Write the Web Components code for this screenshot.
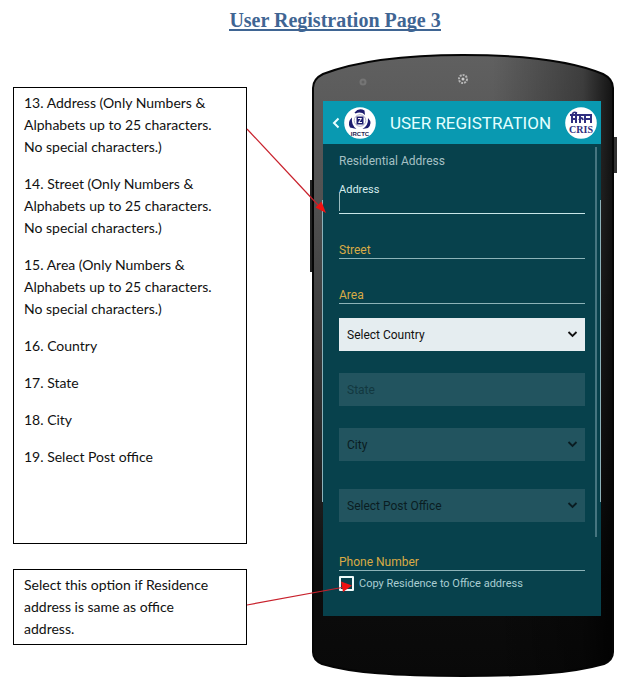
<!DOCTYPE html>
<html lang="en">
<head>
<meta charset="utf-8">
<title>User Registration Page 3</title>
<style>
  body { margin: 0; background: #fff; font-family: Lato, "Liberation Sans", sans-serif; }
</style>
</head>
<body>
<guide-page>
  <span slot="title">User Registration Page 3</span>
  <note-box slot="notes" class="grow">
    <p>13. Address (Only Numbers &amp; Alphabets up to 25 characters. No special characters.)</p>
    <p>14. Street (Only Numbers &amp; Alphabets up to 25 characters. No special characters.)</p>
    <p>15. Area (Only Numbers &amp; Alphabets up to 25 characters. No special characters.)</p>
    <p>16. Country</p>
    <p>17. State</p>
    <p>18. City</p>
    <p>19. Select Post office</p>
  </note-box>
  <note-box slot="notes">
    <p>Select this option if Residence address is same as office address.</p>
  </note-box>
  <phone-frame slot="phone">
    <app-header slot="bar">USER REGISTRATION</app-header>
    <address-form>
      <line-field active>Address</line-field>
      <line-field>Street</line-field>
      <line-field>Area</line-field>
      <drop-down light label="Select Country"></drop-down>
      <state-field label="State"></state-field>
      <drop-down label="City"></drop-down>
      <drop-down label="Select Post Office" class="last"></drop-down>
      <line-field class="phone">Phone Number</line-field>
      <check-option>Copy Residence to Office address</check-option>
    </address-form>
  </phone-frame>
</guide-page>

<script>
const define = (name, html) => customElements.define(name, class extends HTMLElement {
  constructor() {
    super();
    this.attachShadow({ mode: 'open' }).innerHTML =
      html.replaceAll('{{label}}', this.getAttribute('label') || '');
  }
});

define('guide-page', `
<style>
  :host { display: block; position: relative; padding: 8px 17px 10px 13px; }
  h1 { margin: 0 0 22px 42px; text-align: center; font: bold 20px/24px "Liberation Serif", serif; color: #3f6593; }
  h1 span { border-bottom: 2px solid #3f6593; display: inline-block; line-height: 18px; }
  main { display: grid; grid-template-columns: minmax(0, 234fr) minmax(0, 303fr); column-gap: 65px; }
  .notes { display: flex; flex-direction: column; gap: 25px; padding: 33px 0 32px; }
  ::slotted(.grow) { flex: 1; }
  .arrows { position: absolute; inset: 0; width: 100%; height: 100%; pointer-events: none; }
</style>
<h1><span><slot name="title"></slot></span></h1>
<main>
  <div class="notes"><slot name="notes"></slot></div>
  <slot name="phone"></slot>
</main>
<svg class="arrows" viewBox="0 0 632 687" preserveAspectRatio="none" aria-hidden="true">
  <g stroke="#c8202b" stroke-width="1.2" fill="#ee1111">
    <path d="M247 129 L318 205"/><path stroke="none" d="M326 213 L315.500 207.500 L321.500 201.500 Z"/>
    <path d="M247 605 L342 587.500"/><path stroke="none" d="M352 585.500 L341 581.500 L343 592 Z"/>
  </g>
</svg>`);

define('note-box', `
<style>
  :host { display: block; box-sizing: border-box; border: 1px solid #000; padding: 4px 24px 4px 10px; color: #111; font-size: 14px; line-height: 22px; background: #fff; }
  ::slotted(p) { margin: 0 0 15px; }
  ::slotted(p:last-child) { margin: 0; }
</style><slot></slot>`);

define('phone-frame', `
<style>
  :host { display: block; position: relative; padding: 47px 14px 61px 11px; }
  .body { position: absolute; inset: 0; width: 100%; height: 100%; overflow: visible; }
  .screen { position: relative; display: flex; flex-direction: column; min-height: 515px; background: #07414c; font-family: Roboto, sans-serif; }
  .scroll { position: absolute; right: 4px; top: 46px; width: 2px; height: 390px; background: #467580; }
  .edge { position: absolute; left: -1px; right: 0; top: 99px; height: 302px; border: solid #8db2ba; border-width: 0 1px; pointer-events: none; }
</style>
<svg class="body" viewBox="0 0 303 623" preserveAspectRatio="none" aria-hidden="true">
  <defs>
    <linearGradient id="shell" x1="0" y1="0" x2="0" y2="1">
      <stop offset="0" stop-color="#606060"/><stop offset=".25" stop-color="#505050"/>
      <stop offset=".6" stop-color="#2b2b2b"/><stop offset=".85" stop-color="#0c0c0c"/><stop offset="1" stop-color="#090909"/>
    </linearGradient>
    <linearGradient id="side" x1="0" y1="0" x2="1" y2="0">
      <stop offset=".6" stop-color="#000" stop-opacity="0"/><stop offset=".9" stop-color="#000" stop-opacity=".35"/><stop offset="1" stop-color="#000" stop-opacity=".8"/>
    </linearGradient>
  </defs>
  <rect x="-2" y="126" width="4" height="92" fill="#222"/>
  <rect x="301" y="83" width="4" height="36" fill="#333"/>
  <path d="M1 34 Q1 25 11 20 C50 5 100 1 151 1 S255 5 291 20 Q301 25 301 34 V598 Q301 606 292 610 C260 619 220 622 151 622 S40 619 10 610 Q1 606 1 598 Z" fill="url(#shell)"/>
  <path d="M1 34 Q1 25 11 20 C50 5 100 1 151 1 S255 5 291 20 Q301 25 301 34 V598 Q301 606 292 610 C260 619 220 622 151 622 S40 619 10 610 Q1 606 1 598 Z" fill="url(#side)" stroke="#050505" stroke-width="2"/>
  <circle cx="51" cy="28" r="3.500" fill="#757575"/><circle cx="51" cy="28" r="1.500" fill="#626262"/>
  <circle cx="151" cy="25" r="4" fill="none" stroke="#b5b5b5" stroke-width="2" stroke-dasharray="2 1"/><circle cx="151" cy="25" r="1.500" fill="#ccc"/>
</svg>
<div class="screen">
  <slot name="bar"></slot><slot></slot>
  <div class="scroll"></div><div class="edge"></div>
</div>`);

define('app-header', `
<style>
  :host { display: flex; align-items: center; height: 43px; padding: 0 4px 0 8px; background: #0999b1; color: #e4ffff; }
  button { border: 0; padding: 0; background: none; width: 10px; height: 20px; margin-right: 3px; }
  button svg { display: block; }
  h2 { flex: 1; margin: 0; font-size: 17px; font-weight: 400; text-align: center; white-space: nowrap; }
  svg { flex: none; }
</style>
<button aria-label="Back"><svg width="10" height="20" viewBox="0 0 10 20"><path d="M7.500 5.500 L3 10 L7.500 14.500" fill="none" stroke="#eaffff" stroke-width="2"/></svg></button>
<svg width="32" height="32" viewBox="0 0 32 32" role="img" aria-label="IRCTC">
  <circle cx="16" cy="16" r="15.800" fill="#fff"/>
  <g fill="none" stroke="#9a9ab8" stroke-width=".8"><circle cx="16" cy="13.500" r="5.800"/></g>
  <g fill="#1d1d6e">
    <path d="M10.500 5.500 Q15 0 20.500 3.500 L21 8 Q17 4 11.500 6.500 Z"/>
    <path d="M24 11 Q29 16 24 21 L18.500 22 Q24.500 18.500 24 11 Z"/>
    <path d="M8 10.500 Q3 15 6 20.500 L12.500 22 Q7 18 8 10.500 Z"/>
    <rect x="12.500" y="9.500" width="7" height="8"/>
  </g>
  <path d="M14 11.500 H17.500 L14.500 15.500 H18" fill="none" stroke="#fff" stroke-width="1"/>
  <text x="16" y="28.500" text-anchor="middle" font-family="Liberation Sans" font-weight="bold" font-size="6" fill="#1d1d4e">IRCTC</text>
</svg>
<h2><slot></slot></h2>
<svg width="32" height="32" viewBox="0 0 32 32" role="img" aria-label="CRIS">
  <circle cx="16" cy="16" r="15.800" fill="#fff"/>
  <g fill="none" stroke="#302f80" stroke-width="2">
    <path d="M5 8 H27"/>
    <path d="M7 8 V16 M11 5 V16 M15 8 V16 M20 8 V16 M26 8 V16"/>
    <path d="M6 12 H12 M14 13 Q17 9 18 13 M20 12 H26"/>
    <path d="M7 8 Q8 4 12 6" stroke-width="1.500"/>
  </g>
  <text x="16" y="25.500" text-anchor="middle" font-family="Liberation Serif" font-weight="bold" font-size="10" fill="#302f80">CRIS</text>
</svg>`);

define('address-form', `
<style>
  :host { display: flex; flex-direction: column; padding: 8px 16px 24px; }
  h3 { margin: 0; font-size: 12px; line-height: 18px; font-weight: 400; color: #a5c0c4; }
  ::slotted(line-field) { margin-top: 29px; }
  ::slotted(line-field[active]) { margin-top: 12px; }
  ::slotted(drop-down[light]) { margin-top: 14px; }
  ::slotted(state-field), ::slotted(drop-down) { margin-top: 22px; }
  ::slotted(.last) { margin-top: 28px; }
  ::slotted(.phone) { margin-top: 33px; }
  ::slotted(check-option) { margin-top: 5px; }
</style>
<h3>Residential Address</h3><slot></slot>`);

define('line-field', `
<style>
  :host { display: grid; color: #d9ab45; font-size: 12px; line-height: 15px; border-bottom: 1px solid #8cb3b8; }
  :host([active]) { color: #d5ecec; font-size: 11px; border-color: #c8e6e8; padding-bottom: 16px; }
  label, input { grid-area: 1 / 1; }
  input { border: 0; padding: 0; width: 100%; height: 15px; background: none; outline: 0; font: inherit; color: #fff; min-width: 0; }
  i { display: none; }
  :host([active]) i { display: block; position: absolute; width: 1px; height: 19px; margin-top: 10px; background: #9bbcc0; }
</style>
<label for="f"><slot></slot></label><input id="f"><i></i>`);

define('drop-down', `
<style>
  :host { display: grid; align-items: center; height: 33px; color: #0a1d22; background: #22545f; font-size: 12px; }
  :host([light]) { background: #e5edf0; color: #111; }
  select, svg { grid-area: 1 / 1; }
  select { appearance: none; width: 100%; height: 100%; border: 0; border-radius: 0; background: none; padding: 0 30px 0 8px; font: inherit; color: inherit; }
  svg { justify-self: end; margin-right: 7px; pointer-events: none; }
</style>
<select aria-label="{{label}}"><option>{{label}}</option></select>
<svg width="11" height="9" viewBox="0 0 11 9"><path d="M1.500 2 L5.500 6 L9.500 2" fill="none" stroke="currentColor" stroke-width="1.800"/></svg>`);

define('state-field', `
<style>
  :host { display: block; height: 33px; background: #22545f; font-size: 12px; }
  input { box-sizing: border-box; width: 100%; height: 100%; border: 0; background: none; padding: 0 8px; font: inherit; color: #153c44; }
  input::placeholder { color: #123840; opacity: 1; }
</style>
<input aria-label="{{label}}" placeholder="{{label}}" disabled>`);

define('check-option', `
<style>
  :host { display: block; font-size: 11px; line-height: 15px; color: #a9cdd2; }
  label { display: flex; align-items: center; gap: 5px; }
  input { appearance: none; box-sizing: border-box; margin: 0; width: 15px; height: 15px; border: 2px solid #eefafa; border-radius: 1px; }
</style>
<label><input type="checkbox"><span><slot></slot></span></label>`);
</script>
</body>
</html>
